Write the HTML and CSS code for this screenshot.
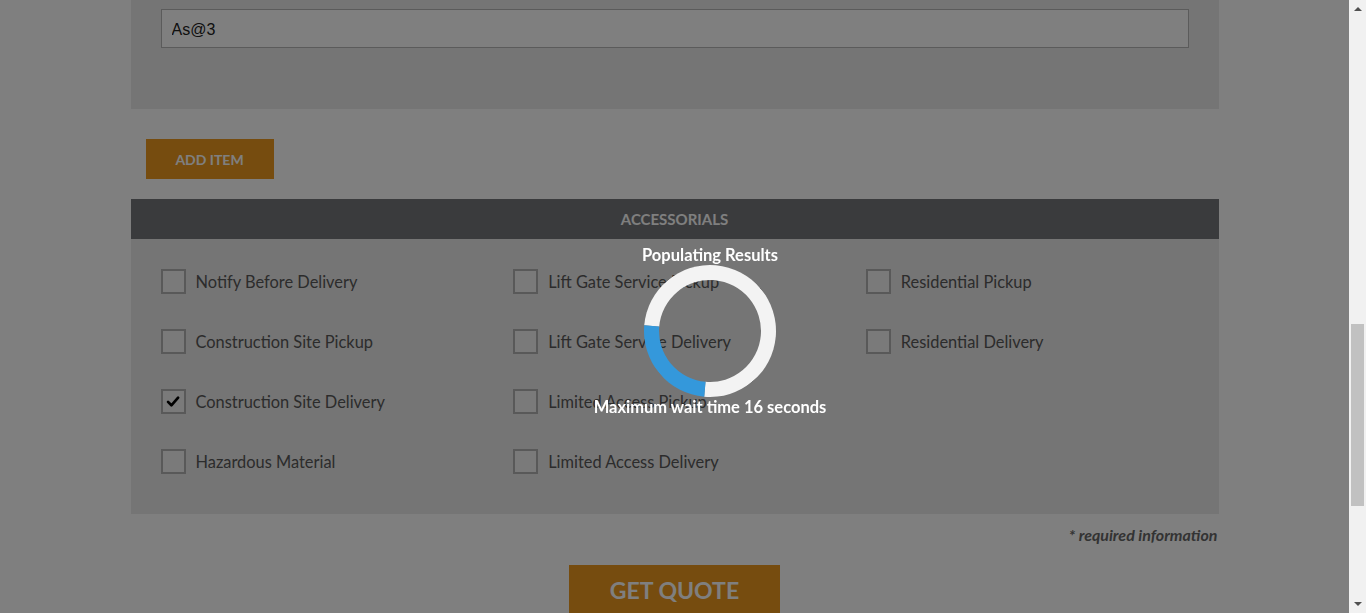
FILE: index.html
```html
<!DOCTYPE html>
<html lang="en">
<head>
<meta charset="utf-8">
<title>Quote</title>
<link rel="stylesheet" href="styles.css">
</head>
<body>
<div class="viewport">
  <main class="page">
    <div class="container">
      <section class="item-panel">
        <input class="text-input" type="text" value="As@3">
      </section>
      <div class="actions">
        <button class="btn btn-add" type="button">ADD ITEM</button>
      </div>
      <section class="accessorials">
        <h2 class="acc-header">ACCESSORIALS</h2>
        <div class="acc-grid">
          <div class="acc-col">
            <label class="acc-item"><span class="box"></span><span class="label">Notify Before Delivery</span></label>
            <label class="acc-item"><span class="box"></span><span class="label">Construction Site Pickup</span></label>
            <label class="acc-item"><span class="box"><svg class="check" viewBox="0 0 25 25" width="21" height="21"><polyline points="6,13 10,17 18,8" fill="none" stroke="#000" stroke-width="3.2" stroke-linecap="round" stroke-linejoin="round"/></svg></span><span class="label">Construction Site Delivery</span></label>
            <label class="acc-item"><span class="box"></span><span class="label">Hazardous Material</span></label>
          </div>
          <div class="acc-col">
            <label class="acc-item"><span class="box"></span><span class="label">Lift Gate Service Pickup</span></label>
            <label class="acc-item"><span class="box"></span><span class="label">Lift Gate Service Delivery</span></label>
            <label class="acc-item"><span class="box"></span><span class="label">Limited Access Pickup</span></label>
            <label class="acc-item"><span class="box"></span><span class="label">Limited Access Delivery</span></label>
          </div>
          <div class="acc-col">
            <label class="acc-item"><span class="box"></span><span class="label">Residential Pickup</span></label>
            <label class="acc-item"><span class="box"></span><span class="label">Residential Delivery</span></label>
          </div>
        </div>
      </section>
      <p class="required">* required information</p>
      <div class="submit">
        <button class="btn btn-quote" type="button">GET QUOTE</button>
      </div>
    </div>
  </main>
  <div class="scrollbar">
    <span class="arrow arrow-up"></span>
    <div class="track"><div class="thumb"></div></div>
    <span class="arrow arrow-down"></span>
  </div>
</div>
<div class="overlay"></div>
<div class="loader">
  <div class="loader-title">Populating Results</div>
  <div class="spinner"></div>
  <div class="loader-text">Maximum wait time 16 seconds</div>
</div>
</body>
</html>
```

FILE: styles.css
```css
* { box-sizing: border-box; }
html, body { margin: 0; padding: 0; }
body {
  width: 1366px;
  height: 613px;
  overflow: hidden;
  font-family: Lato, "Open Sans", sans-serif;
  background: #fff;
}
.viewport {
  display: flex;
  height: 613px;
}
.page {
  flex: 1;
  background: #fff;
  overflow: hidden;
}
.container {
  width: 1088px;
  margin: 0 auto;
}
.item-panel {
  background: #eaeaea;
  padding: 9px 30px 61px;
}
.text-input {
  display: block;
  width: 100%;
  height: 39px;
  border: 1px solid #b6b6b6;
  background: #fff;
  padding: 2px 10px 0;
  font-family: "Liberation Sans", Arial, sans-serif;
  font-size: 16px;
  color: #222;
}
.actions {
  padding: 30px 15px 20px;
}
.btn {
  border: 0;
  background: #ec981e;
  color: #fff;
  font-family: Lato, sans-serif;
  font-weight: 700;
  cursor: pointer;
}
.btn-add {
  width: 128px;
  height: 40px;
  font-size: 14px;
  padding: 0;
}
.acc-header {
  margin: 0;
  height: 40px;
  line-height: 40px;
  background: #75777b;
  color: #fff;
  text-align: center;
  font-size: 15px;
  font-weight: 700;
}
.acc-grid {
  background: #eaeaea;
  display: grid;
  grid-template-columns: repeat(3, 1fr);
  padding: 30px 15px 40px;
}
.acc-col {
  display: flex;
  flex-direction: column;
  gap: 35px;
  padding-left: 15px;
  min-width: 0;
}
.acc-item {
  display: flex;
  align-items: center;
  gap: 10px;
  height: 25px;
}
.box {
  width: 25px;
  height: 25px;
  flex: none;
  border: 2px solid #b3b3b3;
  background: #f4f4f4;
  display: flex;
  align-items: center;
  justify-content: center;
}
.check { display: block; }
.label {
  font-size: 16.4px;
  color: #585858;
  white-space: nowrap;
}
.required {
  margin: 11px 1px 0 0;
  text-align: right;
  font-size: 16px;
  line-height: 20px;
  font-style: italic;
  font-weight: 700;
  color: #666;
}
.submit {
  padding-top: 20px;
  display: flex;
  justify-content: center;
}
.btn-quote {
  width: 211px;
  height: 50px;
  font-size: 23px;
  padding: 0;
}
.scrollbar {
  width: 17px;
  flex: none;
  background: #f1f1f1;
  display: flex;
  flex-direction: column;
  align-items: center;
}
.arrow {
  width: 0;
  height: 0;
  border-left: 4px solid transparent;
  border-right: 4px solid transparent;
  flex: none;
}
.arrow-up {
  margin-top: 7px;
  border-bottom: 4px solid #505050;
}
.arrow-down {
  margin-bottom: 7px;
  border-top: 4px solid #505050;
}
.track {
  flex: 1;
  width: 100%;
  padding-top: 313px;
}
.thumb {
  width: 13px;
  height: 182px;
  margin: 0 auto;
  background: #c1c1c1;
}
.overlay {
  position: fixed;
  left: 0;
  top: 0;
  right: 17px;
  bottom: 0;
  background: rgba(0, 0, 0, 0.5);
}
.loader {
  position: fixed;
  left: 560px;
  top: 245px;
  width: 300px;
  display: flex;
  flex-direction: column;
  align-items: center;
  color: #fff;
  font-family: Lato, sans-serif;
  font-weight: 700;
  font-size: 16.5px;
}
.loader-title, .loader-text {
  line-height: 20px;
  white-space: nowrap;
}
.spinner {
  width: 132px;
  height: 132px;
  border-radius: 50%;
  border: 15px solid #f3f3f3;
  border-left-color: #3498db;
  transform: rotate(-40deg);
}
```
